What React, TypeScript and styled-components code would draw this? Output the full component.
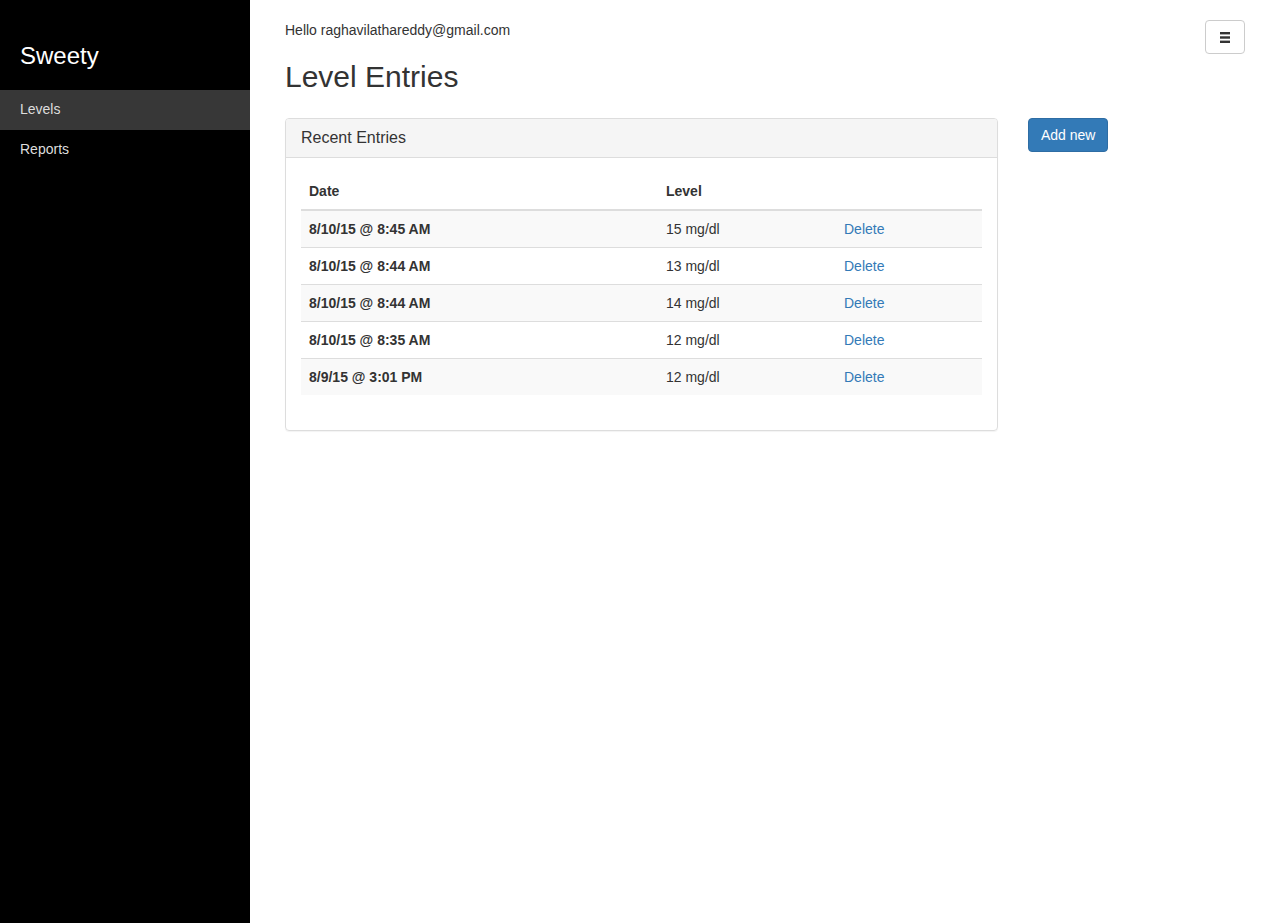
import styled, { createGlobalStyle } from 'styled-components';

const GlobalStyle = createGlobalStyle`
  html, body {
    margin: 0;
    padding: 0;
    background: #fff;
  }
  body {
    font-family: "Liberation Sans", Arial, Helvetica, sans-serif;
    font-size: 14px;
    line-height: 1.42857;
    color: #333;
  }
  * { box-sizing: border-box; }
`;

const Layout = styled.div`
  display: flex;
  min-height: 923px;
`;

const Sidebar = styled.nav`
  width: 250px;
  flex-shrink: 0;
  background: #000;
  padding-top: 39px;
`;

const Brand = styled.div`
  font-size: 24px;
  line-height: 34px;
  color: #fff;
  padding: 0 20px;
  margin-bottom: 17px;
`;

const NavItem = styled.a<{ $active?: boolean }>`
  display: block;
  height: 40px;
  padding: 10px 20px;
  color: #ddd;
  text-decoration: none;
  background: ${(p) => (p.$active ? '#373737' : 'transparent')};
`;

const Main = styled.main`
  flex: 1;
  padding: 20px 35px 0 35px;
  display: flex;
  flex-direction: column;
`;

const TopBar = styled.div`
  display: flex;
  justify-content: space-between;
  align-items: flex-start;
`;

const Greeting = styled.div`
  font-size: 14px;
  line-height: 20px;
`;

const ToggleButton = styled.button`
  width: 40px;
  height: 34px;
  border: 1px solid #ccc;
  border-radius: 4px;
  background: #fff;
  display: flex;
  align-items: center;
  justify-content: center;
  padding: 0;
`;

const Heading = styled.h2`
  font-size: 30px;
  font-weight: 500;
  line-height: 33px;
  margin: 6px 0 25px;
  color: #333;
`;

const ContentRow = styled.div`
  display: flex;
  align-items: flex-start;
  gap: 30px;
`;

const Panel = styled.section`
  width: 713px;
  border: 1px solid #ddd;
  border-radius: 4px;
  box-shadow: 0 1px 1px rgba(0, 0, 0, 0.05);
`;

const PanelHeading = styled.div`
  background: #f5f5f5;
  border-bottom: 1px solid #ddd;
  border-radius: 3px 3px 0 0;
  padding: 10px 15px;
  font-size: 16px;
  line-height: 18px;
  height: 39px;
`;

const PanelBody = styled.div`
  padding: 15px;
`;

const Table = styled.table`
  width: 100%;
  border-collapse: collapse;
  margin-bottom: 20px;
`;

const Th = styled.th<{ $w: number }>`
  width: ${(p) => p.$w}px;
  text-align: left;
  padding: 8px;
  line-height: 20px;
  font-weight: bold;
  border-bottom: 2px solid #ddd;
`;

const Tr = styled.tr`
  &:nth-child(odd) {
    background: #f9f9f9;
  }
  & + & td {
    border-top: 1px solid #ddd;
  }
`;

const Td = styled.td<{ $bold?: boolean }>`
  padding: 8px;
  line-height: 20px;
  font-weight: ${(p) => (p.$bold ? 'bold' : 'normal')};
`;

const DeleteLink = styled.a`
  color: #337ab7;
  text-decoration: none;
`;

const PrimaryButton = styled.button`
  font-family: inherit;
  font-size: 14px;
  line-height: 20px;
  padding: 6px 12px;
  color: #fff;
  background: #337ab7;
  border: 1px solid #2e6da4;
  border-radius: 4px;
  height: 34px;
`;

const entries = [
  { date: '8/10/15 @ 8:45 AM', level: '15 mg/dl' },
  { date: '8/10/15 @ 8:44 AM', level: '13 mg/dl' },
  { date: '8/10/15 @ 8:44 AM', level: '14 mg/dl' },
  { date: '8/10/15 @ 8:35 AM', level: '12 mg/dl' },
  { date: '8/9/15 @ 3:01 PM', level: '12 mg/dl' },
];

function MenuIcon() {
  return (
    <svg width="10" height="11" viewBox="0 0 10 11">
      <rect x="0" y="0" width="10" height="2.4" fill="#333" />
      <rect x="0" y="4.3" width="10" height="2.4" fill="#333" />
      <rect x="0" y="8.6" width="10" height="2.4" fill="#333" />
    </svg>
  );
}

export default function App() {
  return (
    <>
      <GlobalStyle />
      <Layout>
        <Sidebar>
          <Brand>Sweety</Brand>
          <NavItem $active>Levels</NavItem>
          <NavItem>Reports</NavItem>
        </Sidebar>

        <Main>
          <TopBar>
            <Greeting>Hello raghavilathareddy@gmail.com</Greeting>
            <ToggleButton>
              <MenuIcon />
            </ToggleButton>
          </TopBar>

          <Heading>Level Entries</Heading>

          <ContentRow>
            <Panel>
              <PanelHeading>Recent Entries</PanelHeading>
              <PanelBody>
                <Table>
                  <thead>
                    <tr>
                      <Th $w={357}>Date</Th>
                      <Th $w={178}>Level</Th>
                      <Th $w={146}></Th>
                    </tr>
                  </thead>
                  <tbody>
                    {entries.map((e, i) => (
                      <Tr key={i}>
                        <Td $bold>{e.date}</Td>
                        <Td>{e.level}</Td>
                        <Td>
                          <DeleteLink>Delete</DeleteLink>
                        </Td>
                      </Tr>
                    ))}
                  </tbody>
                </Table>
              </PanelBody>
            </Panel>
            <PrimaryButton>Add new</PrimaryButton>
          </ContentRow>
        </Main>
      </Layout>
    </>
  );
}
